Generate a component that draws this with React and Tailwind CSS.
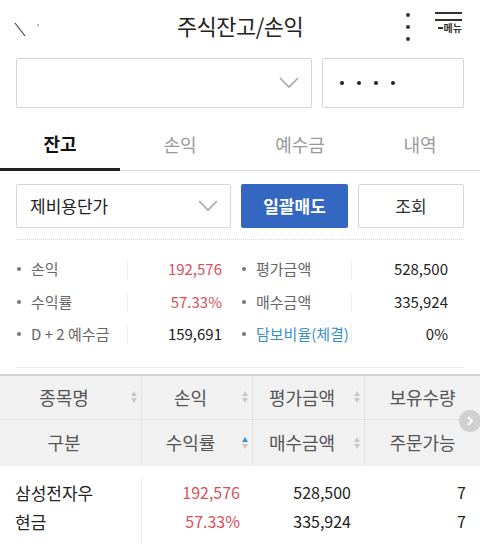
import React from 'react';

const font = { fontFamily: '"Noto Sans CJK KR", "Noto Sans", sans-serif' };

function Chevron({ className }) {
  return (
    <svg className={className} width="20" height="12" viewBox="0 0 20 12" fill="none">
      <path d="M1 1l9 9 9-9" stroke="#a8a8a8" strokeWidth="1.6" />
    </svg>
  );
}

function SortArrows({ up }) {
  return (
    <span className="flex flex-col items-center gap-[2px]">
      <svg width="6" height="5" viewBox="0 0 6 5"><path d="M3 0l3 5H0z" fill={up ? '#3a8fd6' : '#c8c8c8'} /></svg>
      <svg width="6" height="5" viewBox="0 0 6 5"><path d="M0 0h6L3 5z" fill="#c8c8c8" /></svg>
    </span>
  );
}

function Header() {
  return (
    <header className="relative h-[50px] flex items-center justify-center">
      <svg className="absolute left-[14px] top-[22px]" width="28" height="16" viewBox="0 0 28 16">
        <path d="M1 1l10 13" stroke="#444" strokeWidth="1.2" />
        <circle cx="24" cy="3" r="0.8" fill="#666" />
      </svg>
      <h1 className="text-[22px] text-[#222] tracking-tight">주식잔고/손익</h1>
      <div className="absolute left-[406px] top-[13px] flex flex-col gap-[8px]">
        <span className="w-[4px] h-[4px] rounded-full bg-[#333]" />
        <span className="w-[4px] h-[4px] rounded-full bg-[#333]" />
        <span className="w-[4px] h-[4px] rounded-full bg-[#333]" />
      </div>
      <div className="absolute left-[434px] top-[12px] flex flex-col items-end w-[28px]">
        <span className="w-[27px] h-[2px] bg-[#333]" />
        <span className="w-[27px] h-[2px] bg-[#333] mt-[5px]" />
        <span className="text-[10px] leading-[12px] font-bold text-[#333] mt-[1px] flex items-center gap-[1px]">
          <span className="w-[5px] h-[2px] bg-[#333]" />메뉴
        </span>
      </div>
    </header>
  );
}

function InfoRow({ label, value, valueColor, rlabel, rvalue, rlabelColor }) {
  return (
    <div className="flex h-[32.5px] items-center text-[15px]">
      <div className="flex w-[224px] items-center">
        <div className="flex items-center w-[112px] h-[20px] border-r border-[#f0f0f0] text-[#666] whitespace-nowrap">
          <span className="w-[4px] h-[4px] rounded-full bg-[#777] ml-[1px] mr-[10px]" />
          {label}
        </div>
        <div className={`flex-1 text-right pr-[18px] ${valueColor}`}>{value}</div>
      </div>
      <div className="flex flex-1 items-center">
        <div className={`flex items-center w-[112px] h-[20px] border-r border-[#f0f0f0] whitespace-nowrap ${rlabelColor}`}>
          <span className="w-[4px] h-[4px] rounded-full bg-[#777] ml-[2px] mr-[10px] shrink-0" />
          {rlabel}
        </div>
        <div className="flex-1 text-right pr-[16px] text-[#222]">{rvalue}</div>
      </div>
    </div>
  );
}

function HeadCell({ label, sort, up, w }) {
  return (
    <div className={`${w} flex items-center h-full border-r border-[#e2e2e2]`}>
      <span className="flex-1 text-center">{label}</span>
      {sort ? <span className="w-[12px] flex justify-center mr-[1px]"><SortArrows up={up} /></span> : <span className="w-[13px]" />}
    </div>
  );
}

export default function App() {
  return (
    <div className="w-[480px] h-[544px] bg-white overflow-hidden relative" style={font}>
      <Header />

      <div className="flex px-4 gap-[10px] mt-[8px]">
        <div className="w-[296px] h-[50px] border border-[#d6d6d6] rounded-[2px] flex items-center justify-end pr-[12px]">
          <Chevron />
        </div>
        <div className="flex-1 h-[50px] border border-[#d6d6d6] rounded-[2px] flex items-center pl-[17px] gap-[13px]">
          <span className="w-[4px] h-[4px] rounded-full bg-[#222]" />
          <span className="w-[4px] h-[4px] rounded-full bg-[#222]" />
          <span className="w-[4px] h-[4px] rounded-full bg-[#222]" />
          <span className="w-[4px] h-[4px] rounded-full bg-[#222]" />
        </div>
      </div>

      <nav className="flex h-[63px] border-b border-[#d9d9d9] text-[18px]">
        <div className="w-[120px] flex items-center justify-center text-[#111] font-bold border-b-[3px] border-[#222] -mb-[1px] pt-[11px]">잔고</div>
        <div className="w-[120px] flex items-center justify-center text-[#999] pt-[11px]">손익</div>
        <div className="w-[120px] flex items-center justify-center text-[#999] pt-[11px]">예수금</div>
        <div className="w-[120px] flex items-center justify-center text-[#999] pt-[11px]">내역</div>
      </nav>

      <div className="flex px-4 gap-[10px] mt-[13px]">
        <div className="w-[215px] h-[44px] border border-[#d6d6d6] rounded-[2px] flex items-center justify-between pl-[13px] pr-[12px] text-[17px] text-[#222]">
          제비용단가
          <Chevron />
        </div>
        <button className="w-[107px] h-[44px] bg-[#3467c2] rounded-[2px] text-white text-[17px] font-bold">일괄매도</button>
        <button className="flex-1 h-[44px] border border-[#d6d6d6] rounded-[2px] text-[17px] text-[#333]">조회</button>
      </div>

      <div className="mx-4 mt-[11px] border-t border-dotted border-[#d8d8d8]" />

      <div className="px-4 pt-[13px]">
        <InfoRow label="손익" value="192,576" valueColor="text-[#d9505a]" rlabel="평가금액" rvalue="528,500" rlabelColor="text-[#666]" />
        <InfoRow label="수익률" value="57.33%" valueColor="text-[#d9505a]" rlabel="매수금액" rvalue="335,924" rlabelColor="text-[#666]" />
        <InfoRow label="D + 2 예수금" value="159,691" valueColor="text-[#222]" rlabel="담보비율(체결)" rvalue="0%" rlabelColor="text-[#3a8fc6]" />
      </div>

      <div className="mx-4 mt-[16px] border-t border-[#ececec]" />

      <div className="mt-[6px] border-t-2 border-[#d4d4d4] bg-[#f1f1f1] text-[18px] text-[#555]">
        <div className="flex h-[44px] border-b border-[#e2e2e2]">
          <HeadCell w="w-[142px]" label="종목명" sort />
          <HeadCell w="w-[111px]" label="손익" sort />
          <HeadCell w="w-[112px]" label="평가금액" sort />
          <div className="flex-1 flex items-center justify-center">보유수량</div>
        </div>
        <div className="flex h-[46px]">
          <HeadCell w="w-[142px]" label="구분" />
          <HeadCell w="w-[111px]" label="수익률" sort up />
          <HeadCell w="w-[112px]" label="매수금액" sort />
          <div className="flex-1 flex items-center justify-center">주문가능</div>
        </div>
      </div>

      <div className="absolute left-[459px] top-[410px] w-[22px] h-[22px] rounded-full bg-[#d0d0d0] flex items-center justify-center">
        <svg width="8" height="10" viewBox="0 0 8 10"><path d="M2 1l4 4-4 4" stroke="white" strokeWidth="1.8" fill="none" /></svg>
      </div>

      <div className="flex text-[16px] text-[#222] pt-[12px]">
        <div className="w-[142px] border-r border-[#e6e6e6] pl-[15px] h-[80px] text-[17px]">
          <div className="h-[29px] leading-[29px]">삼성전자우</div>
          <div className="h-[29px] leading-[29px]">현금</div>
        </div>
        <div className="w-[98px] text-right text-[#d9505a]">
          <div className="h-[29px] leading-[29px]">192,576</div>
          <div className="h-[29px] leading-[29px]">57.33%</div>
        </div>
        <div className="w-[111px] text-right">
          <div className="h-[29px] leading-[29px]">528,500</div>
          <div className="h-[29px] leading-[29px]">335,924</div>
        </div>
        <div className="w-[115px] text-right">
          <div className="h-[29px] leading-[29px]">7</div>
          <div className="h-[29px] leading-[29px]">7</div>
        </div>
      </div>
    </div>
  );
}
